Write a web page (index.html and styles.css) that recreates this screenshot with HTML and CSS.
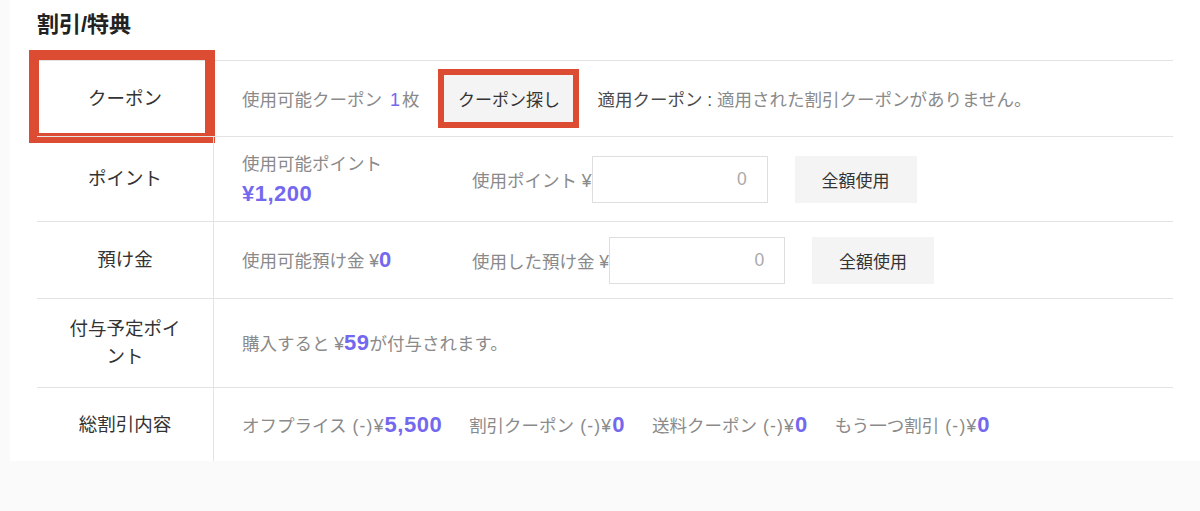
FILE: index.html
```html
<!DOCTYPE html>
<html lang="ja">
<head>
<meta charset="utf-8">
<link rel="stylesheet" href="styles.css">
</head>
<body>
<div class="panel">
  <h2 class="title">割引/特典</h2>
  <div class="table">
    <div class="row row-coupon">
      <div class="label">クーポン</div>
      <div class="content">
        <span class="gray">使用可能クーポン <span class="blue-n">1</span>枚</span>
        <button class="btn btn-coupon">クーポン探し</button>
        <span class="gray"><span class="dark">適用クーポン :</span> 適用された割引クーポンがありません。</span>
      </div>
      <div class="mark"></div>
    </div>
    <div class="row row-point">
      <div class="label">ポイント</div>
      <div class="content">
        <div class="avail gray">
          <div>使用可能ポイント</div>
          <div class="big">¥1,200</div>
        </div>
        <span class="gray">使用ポイント ¥</span>
        <div class="input">0</div>
        <button class="btn btn-all">全額使用</button>
      </div>
    </div>
    <div class="row row-deposit">
      <div class="label">預け金</div>
      <div class="content">
        <div class="avail gray">使用可能預け金 ¥<span class="big">0</span></div>
        <span class="gray">使用した預け金 ¥</span>
        <div class="input">0</div>
        <button class="btn btn-all">全額使用</button>
      </div>
    </div>
    <div class="row row-grant">
      <div class="label">付与予定ポイント</div>
      <div class="content">
        <span class="gray">購入すると ¥<span class="big">59</span>が付与されます。</span>
      </div>
    </div>
    <div class="row row-total">
      <div class="label">総割引内容</div>
      <div class="content totals">
        <span class="gray">オフプライス<span class="pre"> (-)¥</span><span class="big">5,500</span></span>
        <span class="gray">割引クーポン<span class="pre"> (-)¥</span><span class="big">0</span></span>
        <span class="gray">送料クーポン<span class="pre"> (-)¥</span><span class="big">0</span></span>
        <span class="gray">もう一つ割引<span class="pre"> (-)¥</span><span class="big">0</span></span>
      </div>
    </div>
  </div>
</div>
</body>
</html>
```
FILE: styles.css
```css
* { box-sizing: border-box; }
html, body { margin: 0; padding: 0; }
body {
  background: #fafafa;
  font-family: "Liberation Sans", "Noto Sans CJK JP", sans-serif;
  width: 1200px;
  height: 511px;
  overflow: hidden;
}
.panel {
  margin-left: 10px;
  height: 461px;
  background: #fff;
  padding: 10px 27px 0 27px;
}
.title {
  margin: 0 0 20px 0;
  font-size: 22px;
  line-height: 30px;
  font-weight: 700;
  color: #222;
}
.table { display: flex; flex-direction: column; }
.row {
  position: relative;
  display: flex;
  border-top: 1px solid #e3e3e3;
}
.row-coupon { height: 76px; }
.row-point { height: 85px; }
.row-deposit { height: 77px; }
.row-grant { height: 89px; }
.row-total { height: 74px; }
.label {
  width: 177px;
  flex: none;
  border-right: 1px solid #e3e3e3;
  display: flex;
  align-items: center;
  justify-content: center;
  text-align: center;
  font-size: 18.5px;
  line-height: 28px;
  color: #333;
  padding: 0 28px;
}
.content {
  flex: 1;
  display: flex;
  align-items: center;
  padding-left: 28px;
  font-size: 17.5px;
  color: #8a8a8a;
}
.gray { color: #8a8a8a; }
.dark { color: #4a4a4a; }
.blue-n { color: #7468ee; font-size: 18px; margin: 0 2px 0 3px; }
.big {
  font-size: 22px;
  font-weight: 700;
  letter-spacing: 0.5px;
  color: #7468ee;
}
.pre { letter-spacing: 1.2px; }
.avail { width: 230px; flex: none; line-height: 29px; }
.btn {
  border: none;
  background: #f4f4f4;
  font-family: inherit;
  font-size: 17px;
  color: #333;
  height: 47px;
  padding: 0;
}
.btn-coupon {
  width: 129px;
  margin: 0 24px 0 25px;
  outline: 6px solid #dc4c33;
}
.btn-all { width: 122px; margin-left: 27px; }
.input {
  width: 176px;
  height: 47px;
  border: 1px solid #dedede;
  display: flex;
  align-items: center;
  justify-content: flex-end;
  padding-right: 20px;
  color: #aaa;
  font-size: 17.5px;
}
.totals { gap: 27px; }
.mark {
  position: absolute;
  left: -8px;
  top: -11px;
  width: 186px;
  height: 93px;
  border: 10px solid #dc4c33;
}
```
